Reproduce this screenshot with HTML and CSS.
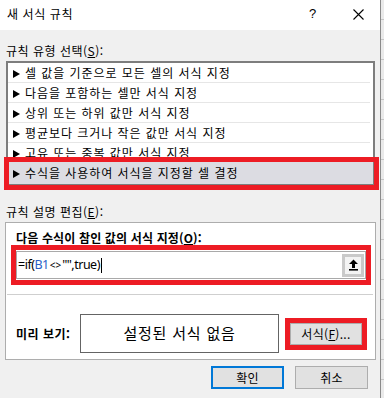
FILE: index.html
```html
<!DOCTYPE html>
<html lang="ko">
<head>
<meta charset="utf-8">
<link rel="stylesheet" href="styles.css">
</head>
<body>
<div class="screen">
  <div class="dialog">
    <header class="titlebar">
      <span class="title">새 서식 규칙</span>
      <span class="help">?</span>
      <span class="close">
        <svg width="11" height="11" viewBox="0 0 11 11"><path d="M0.5 0.5L10.5 10.5M10.5 0.5L0.5 10.5" stroke="#000" stroke-width="1.1" fill="none"/></svg>
      </span>
    </header>
    <main class="content">
      <div class="label label-top">규칙 유형 선택(<u>S</u>):</div>
      <div class="list">
        <div class="item"><span class="tri"></span>셀 값을 기준으로 모든 셀의 서식 지정</div>
        <div class="item"><span class="tri"></span>다음을 포함하는 셀만 서식 지정</div>
        <div class="item"><span class="tri"></span>상위 또는 하위 값만 서식 지정</div>
        <div class="item"><span class="tri"></span>평균보다 크거나 작은 값만 서식 지정</div>
        <div class="item"><span class="tri"></span>고유 또는 중복 값만 서식 지정</div>
        <div class="item selected"><span class="tri"></span>수식을 사용하여 서식을 지정할 셀 결정</div>
        <div class="mark mark-list"></div>
      </div>
      <div class="label label-edit">규칙 설명 편집(<u>E</u>):</div>
      <section class="panel">
        <div class="panel-title">다음 수식이 참인 값의 서식 지정(<u>O</u>):</div>
        <div class="formula-mark">
          <div class="formula">
            <span class="formula-text">=if(<span class="ref">B1</span><span class="op">&lt;&gt;</span>"",true)<span class="caret"></span></span>
            <span class="collapse">
              <svg width="11" height="12" viewBox="0 0 11 12"><path d="M5.5 0.5L10 5H7V9H4V5H1Z" fill="#000"/><rect x="1" y="10" width="9" height="1.6" fill="#000"/></svg>
            </span>
          </div>
        </div>
        <div class="sep"></div>
        <div class="preview-row">
          <span class="preview-label">미리 보기:</span>
          <div class="preview-box">설정된 서식 없음</div>
          <div class="format-mark">
            <span class="btn format-btn">서식(<u>F</u>)...</span>
          </div>
        </div>
      </section>
      <div class="actions">
        <span class="btn action ok">확인</span>
        <span class="btn action">취소</span>
      </div>
    </main>
  </div>
  <div class="edge"></div>
</div>
</body>
</html>
```
FILE: styles.css
```css
* { box-sizing: border-box; }
html, body {
  margin: 0;
  padding: 0;
}
body {
  width: 384px;
  height: 398px;
  overflow: hidden;
  font-family: "Noto Sans CJK KR", "Noto Sans", sans-serif;
  font-size: 12px;
  color: #000;
  background: #f0f0f0;
}
u { text-decoration: underline; text-underline-offset: 1px; }
.screen {
  display: flex;
  height: 398px;
}
.dialog {
  width: 381px;
  height: 398px;
  background: #f0f0f0;
  border-right: 1px solid #8a8a8a;
  display: flex;
  flex-direction: column;
}
.edge {
  width: 3px;
  height: 398px;
  background-color: #eaeaea;
  background-image: repeating-linear-gradient(to bottom, transparent 0, transparent 19px, #c6c6c6 19px, #c6c6c6 20px);
}
.titlebar {
  height: 30px;
  background: #fff;
  display: flex;
  align-items: center;
  padding: 0 0 2px 7px;
}
.title {
  flex: 1;
  font-size: 12px;
  letter-spacing: 0.6px;
  line-height: 16px;
}
.help {
  font-family: "Liberation Sans", sans-serif;
  font-size: 13px;
  width: 44px;
  line-height: 16px;
}
.close {
  width: 27px;
  display: flex;
  padding-top: 1px;
}
.content {
  flex: 1;
  padding: 0 5px 0 0;
}
.label {
  line-height: 16px;
  padding-left: 6px;
  letter-spacing: 0.5px;
}
.label-top { padding-top: 13px; height: 31px; }
.label-edit { padding-top: 19px; height: 37px; }
.list {
  position: relative;
  margin-left: 6px;
  width: 369px;
  height: 124px;
  background: #fff;
  border: 2px solid #7d7d7d;
}
.item {
  height: 20px;
  display: flex;
  align-items: center;
  padding-left: 5px;
  border-bottom: 1px solid #e6e6e6;
  letter-spacing: 0.95px;
  line-height: 16px;
  margin-right: 3px;
}
.item.selected {
  background: #dcdce2;
  border-bottom: none;
  height: 22px;
  margin-top: -1px;
  margin-right: 0;
}
.tri {
  width: 0;
  height: 0;
  border-left: 7px solid #000;
  border-top: 4px solid transparent;
  border-bottom: 4px solid transparent;
  margin-right: 5px;
  margin-top: 2px;
}
.mark {
  position: absolute;
  border: 5px solid #ed1c24;
}
.mark-list {
  left: -4px;
  top: 94px;
  width: 375px;
  height: 33px;
}
.panel {
  margin-left: 5px;
  width: 371px;
  height: 138px;
  background: #fff;
  border: 1px solid #adadad;
  padding: 6px 0 0 0;
}
.panel-title {
  font-weight: bold;
  line-height: 17px;
  height: 17px;
  padding-left: 10px;
  letter-spacing: 0.15px;
}
.formula-mark {
  margin: -1px 4px 0 5px;
  border: 5px solid #ed1c24;
  padding: 1px 0 1px 0;
  height: 40px;
}
.formula {
  height: 28px;
  border: 1px solid #a9a9a9;
  display: flex;
  align-items: center;
  justify-content: space-between;
  padding: 0 1px 0 1px;
}
.formula-text {
  font-family: "Noto Sans", sans-serif;
  font-size: 12.5px;
  line-height: 16px;
  letter-spacing: -0.5px;
  display: flex;
  align-items: center;
}
.ref { color: #2a5fc8; }
.op { font-size: 10px; letter-spacing: 0; margin: 0 1px; }
.caret {
  display: inline-block;
  width: 1px;
  height: 15px;
  background: #000;
  margin-left: 1px;
}
.collapse {
  width: 22px;
  height: 23px;
  background: #f3f3f3;
  border: 3px solid #c9c9c9;
  display: flex;
  align-items: center;
  justify-content: center;
}
.sep {
  margin: 9px 2px 0 1px;
  height: 1px;
  background: #cfcfcf;
}
.preview-row {
  display: flex;
  align-items: center;
  margin-top: 19px;
  padding-left: 10px;
}
.preview-label {
  font-weight: bold;
  width: 64px;
  letter-spacing: 0.5px;
  line-height: 16px;
}
.preview-box {
  width: 199px;
  height: 39px;
  border: 1px solid #646464;
  display: flex;
  align-items: center;
  justify-content: center;
  font-size: 15px;
  letter-spacing: 0.8px;
  line-height: 18px;
  padding-bottom: 2px;
}
.format-mark {
  margin-left: 6px;
  border: 5px solid #ed1c24;
  width: 82px;
  height: 32px;
}
.btn {
  display: flex;
  align-items: center;
  justify-content: center;
  background: #e1e1e1;
  border: 1px solid #adadad;
  line-height: 16px;
  letter-spacing: 0.3px;
}
.format-btn {
  height: 22px;
  width: 72px;
}
.actions {
  display: flex;
  justify-content: flex-end;
  gap: 11px;
  padding: 6px 7px 0 0;
}
.action {
  width: 73px;
  height: 23px;
}
.ok {
  border: 2px solid #0078d7;
}
```
